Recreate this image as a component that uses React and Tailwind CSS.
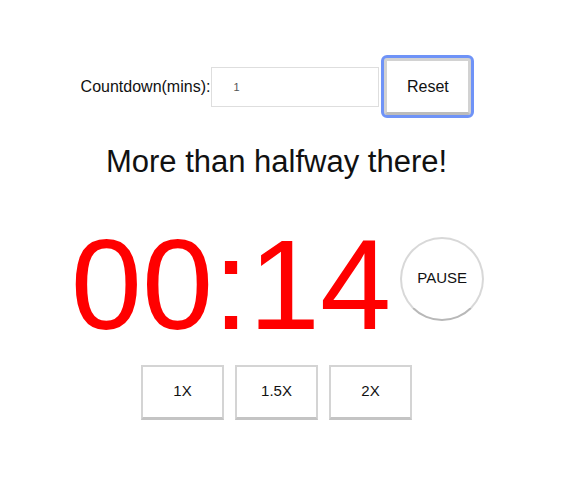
import { useState } from "react"

export default function App() {
    const [mins, setMins] = useState("1");
    const [speed, setSpeed] = useState(1);
    const speeds = ["1X", "1.5X", "2X"];

    return (
        <div className="w-[553px] flex flex-col items-center pt-[55px] bg-white text-black font-['Liberation_Sans',Arial,sans-serif]">
            <div className="flex items-center h-[63px] mr-[1px]">
                <label className="text-[16px] text-[#111]">Countdown(mins):</label>
                <input
                    value={mins}
                    onChange={(e) => setMins(e.target.value)}
                    className="ml-px w-[168px] h-[40px] border border-[#dedede] pl-[21px] text-[11px] text-[#555] outline-none font-['Liberation_Sans',Arial,sans-serif]"
                />
                <button className="ml-[5px] w-[87px] h-[57px] bg-white rounded-[3px] border-[3px] border-[#d2d2d2] border-b-[#bcbcbc] outline-[3px] outline-solid outline-[#6f93f7] outline-offset-0 text-[16px] text-[#111]">
                    Reset
                </button>
            </div>

            <h1 className="mt-[26px] text-[31px] leading-[1.15] text-[#111]">More than halfway there!</h1>

            <div className="mt-[41px] ml-[2px] flex items-center">
                <span className="text-[128px] leading-none text-[#ff0000]">00:14</span>
                <button className="ml-[9px] mb-[12px] w-[84px] h-[84px] rounded-full bg-white border-2 border-[#d8d8d8] border-b-[#b8b8b8] text-[15px] text-[#111]">
                    PAUSE
                </button>
            </div>

            <div className="mt-[16px] flex gap-[11px]">
                {speeds.map((s, i) => (
                    <button
                        key={s}
                        onClick={() => setSpeed(i)}
                        className="w-[83px] h-[55px] bg-white border-2 border-[#d4d4d4] border-b-[3px] border-b-[#c4c4c4] text-[15px] text-[#111]"
                    >
                        {s}
                    </button>
                ))}
            </div>
        </div>
    )
}
